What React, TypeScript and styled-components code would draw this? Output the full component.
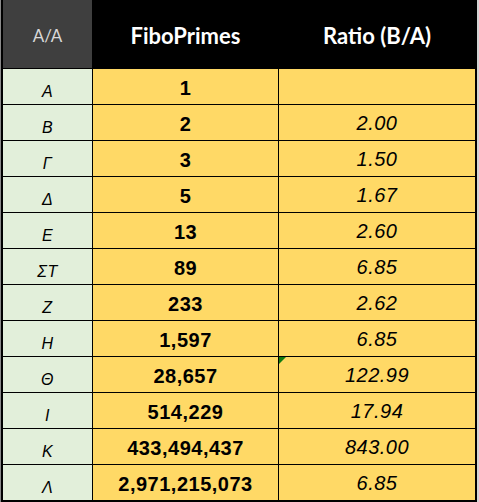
import * as React from 'react';
import styled, { createGlobalStyle, css } from 'styled-components';

const GlobalStyle = createGlobalStyle`
    html, body {
        margin: 0;
        padding: 0;
        background: #d4d4d4;
    }
`;

const FrameStyled = styled.div`
    width: 479px;
    height: 502px;
    padding-left: 1px;
    box-sizing: border-box;
    background: linear-gradient(to right, #8a8a8a 0 1px, #d4d4d4 1px);
`;

const TableStyled = styled.div`
    display: grid;
    grid-template-columns: 89px 185px 196px;
    grid-template-rows: 68px repeat(12, 35px);
    gap: 1px;
    width: 476px;
    box-sizing: border-box;
    background: #000;
    border-left: 2px solid #000;
    border-right: 2px solid #000;
    border-bottom: 2px solid #000;
`;

const HeadCellStyled = styled.div<{ $corner?: boolean }>`
    display: flex;
    align-items: center;
    justify-content: center;
    font-family: Lato, "Open Sans", sans-serif;
    ${(p) =>
        p.$corner
            ? css`
                  background: #3f3f3f;
                  color: #d9d9d9;
                  font-size: 17px;
                  font-weight: 400;
              `
            : css`
                  background: #000;
                  color: #fff;
                  font-size: 22px;
                  font-weight: 700;
              `}
    padding-top: 3px;
`;

const LetterCellStyled = styled.div`
    display: flex;
    align-items: center;
    justify-content: center;
    background: #e2efda;
    color: #000;
    font-family: "Liberation Sans", Arial, sans-serif;
    font-style: italic;
    font-size: 16px;
    letter-spacing: 0.5px;
    padding-top: 10px;
    box-sizing: border-box;
`;

const ValueCellStyled = styled.div<{ $bold?: boolean; $flag?: boolean }>`
    position: relative;
    display: flex;
    align-items: center;
    justify-content: center;
    background: #ffd966;
    color: #000;
    font-family: "Liberation Sans", Arial, sans-serif;
    font-size: 20px;
    letter-spacing: 0.5px;
    font-weight: ${(p) => (p.$bold ? 700 : 400)};
    font-style: ${(p) => (p.$bold ? 'normal' : 'italic')};
    padding-top: ${(p) => (p.$bold ? '3px' : '2px')};
    box-sizing: border-box;

    ${(p) =>
        p.$flag &&
        css`
            &::before {
                content: '';
                position: absolute;
                top: 0;
                left: 0;
                border-top: 7px solid #107c10;
                border-right: 7px solid transparent;
            }
        `}
`;

interface Row {
    letter: string;
    value: string;
    ratio: string;
    flag?: boolean;
}

const rows: Row[] = [
    { letter: 'Α', value: '1', ratio: '' },
    { letter: 'Β', value: '2', ratio: '2.00' },
    { letter: 'Γ', value: '3', ratio: '1.50' },
    { letter: 'Δ', value: '5', ratio: '1.67' },
    { letter: 'Ε', value: '13', ratio: '2.60' },
    { letter: 'ΣΤ', value: '89', ratio: '6.85' },
    { letter: 'Ζ', value: '233', ratio: '2.62' },
    { letter: 'Η', value: '1,597', ratio: '6.85' },
    { letter: 'Θ', value: '28,657', ratio: '122.99', flag: true },
    { letter: 'Ι', value: '514,229', ratio: '17.94' },
    { letter: 'Κ', value: '433,494,437', ratio: '843.00' },
    { letter: 'Λ', value: '2,971,215,073', ratio: '6.85' },
];

export default function App() {
    return (
        <>
            <GlobalStyle />
            <FrameStyled>
                <TableStyled>
                    <HeadCellStyled $corner>Α/Α</HeadCellStyled>
                    <HeadCellStyled>FiboPrimes</HeadCellStyled>
                    <HeadCellStyled>Ratio (B/A)</HeadCellStyled>
                    {rows.map((r) => (
                        <React.Fragment key={r.letter}>
                            <LetterCellStyled>{r.letter}</LetterCellStyled>
                            <ValueCellStyled $bold>{r.value}</ValueCellStyled>
                            <ValueCellStyled $flag={r.flag}>{r.ratio}</ValueCellStyled>
                        </React.Fragment>
                    ))}
                </TableStyled>
            </FrameStyled>
        </>
    );
}
